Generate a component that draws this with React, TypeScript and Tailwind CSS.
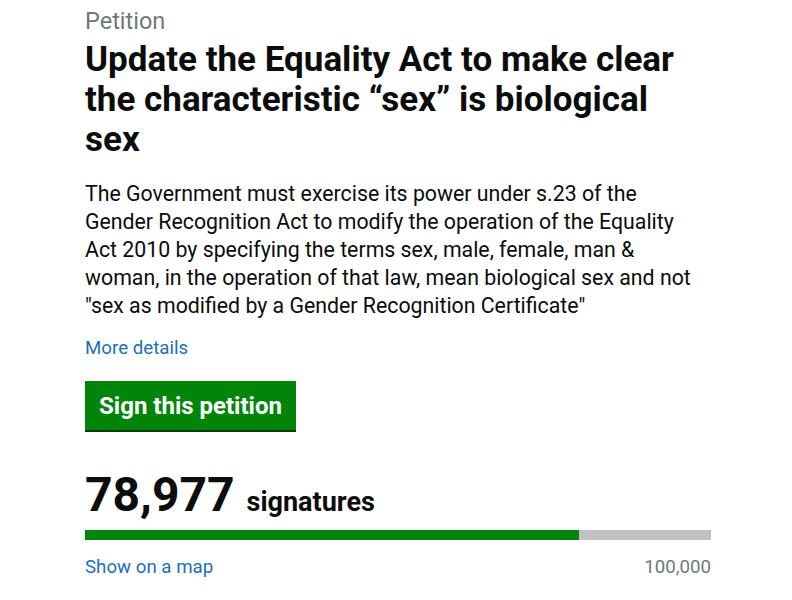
export default function App() {
  const count = 78977;
  const target = 100000;
  const pct = (count / target) * 100;

  return (
    <div className="min-h-screen bg-white font-['Roboto',sans-serif] text-[#0b0c0c]">
      <div className="ml-[85px] w-[626px] pt-[6px]">
        <p className="text-[23.5px] leading-[30px] text-[#6f777b]">Petition</p>
        <h1 className="mt-[4px] text-[35px] font-bold leading-[40px]">
          Update the Equality Act to make clear the characteristic “sex” is biological sex
        </h1>
        <p className="mt-[20px] w-[614px] text-[21.3px] leading-[28px]">
          The Government must exercise its power under s.23 of the Gender Recognition Act to modify the operation of the Equality Act 2010 by specifying the terms sex, male, female, man &amp; woman, in the operation of that law, mean biological sex and not "sex as modified by a Gender Recognition Certificate"
        </p>
        <a href="#" className="mt-[16px] block text-[18.7px] leading-[24px] text-[#1d6fb8]">More details</a>
        <button className="mt-[21px] h-[49px] w-[211px] bg-[#00850a] text-[24px] font-bold text-white shadow-[0_2px_0_#003d05]">
          Sign this petition
        </button>
        <div className="mt-[37px] flex items-baseline gap-[12px]">
          <span className="text-[48px] font-bold leading-[56px]">78,977</span>
          <span className="text-[27px] font-bold">signatures</span>
        </div>
        <div className="mt-[7px] h-[10px] w-full bg-[#bfc1c3]">
          <div className="h-full bg-[#00850a]" style={{ width: `${pct}%` }} />
        </div>
        <div className="mt-[15px] flex justify-between text-[18.7px] leading-[24px]">
          <a href="#" className="text-[#1d6fb8]">Show on a map</a>
          <span className="text-[#6f777b]">100,000</span>
        </div>
      </div>
    </div>
  );
}
